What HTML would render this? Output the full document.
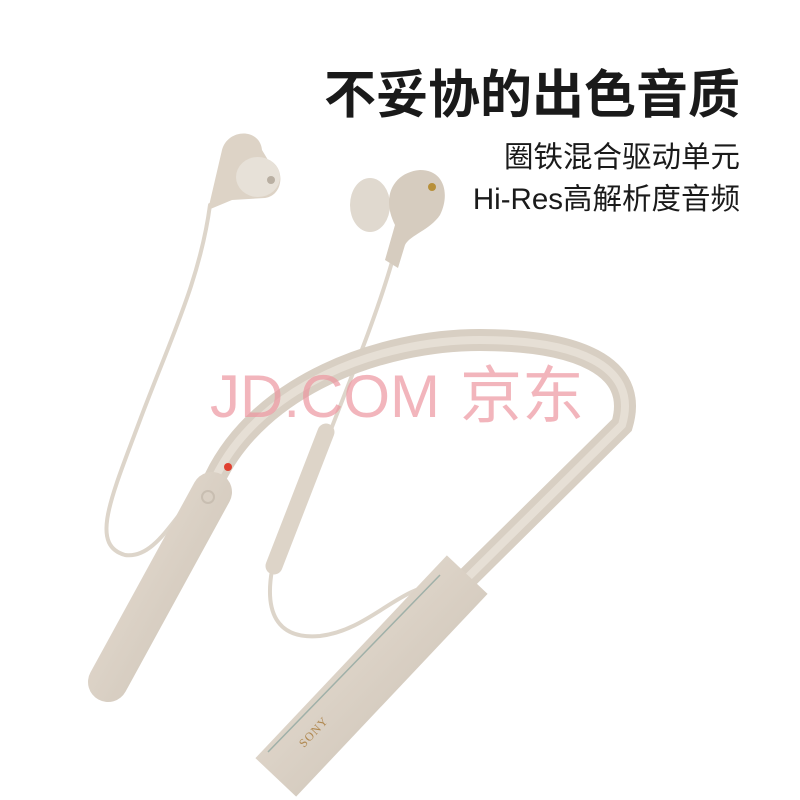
<!DOCTYPE html>
<html><head><meta charset="utf-8"><style>
html,body{margin:0;padding:0;background:#fff;}
.wrap{position:relative;width:800px;height:800px;overflow:hidden;background:#fff;font-family:"Liberation Sans","Noto Sans CJK SC",sans-serif;}
.t{position:absolute;right:60px;color:#1a1a1a;white-space:nowrap;}
</style></head><body><div class="wrap">
<svg width="800" height="800" style="position:absolute;left:0;top:0">
<defs>
<linearGradient id="g" x1="0" y1="0" x2="1" y2="1"><stop offset="0" stop-color="#e6ddd2"/><stop offset="1" stop-color="#cdc3b6"/></linearGradient>
</defs>
<g fill="none" stroke="#ddd5ca" stroke-width="4" stroke-linecap="round">
<path d="M210,205 C200,280 170,340 140,420 C110,500 90,545 125,555 C160,560 180,500 210,485"/>
<path d="M392,262 C375,320 350,380 330,432"/>
<path d="M272,570 C265,610 275,640 320,636 C370,630 400,585 440,585"/>
</g>
<path d="M215,478 C260,385 380,340 480,340 C575,340 640,365 622,425 L450,595" fill="none" stroke="#d8cfc3" stroke-width="22" stroke-linecap="round"/>
<path d="M215,478 C260,385 380,340 480,340 C575,340 640,365 622,425 L450,595" fill="none" stroke="#e6dfd5" stroke-width="8" stroke-linecap="round"/>
<line x1="108" y1="682" x2="212" y2="492" stroke="url(#g)" stroke-width="40" stroke-linecap="round"/>
<circle cx="228" cy="467" r="4" fill="#e04030"/>
<circle cx="208" cy="497" r="6" fill="none" stroke="#c8beb1" stroke-width="2"/>
<line x1="448" y1="595" x2="295" y2="757" stroke="url(#g)" stroke-width="56" stroke-linecap="square"/>
<line x1="440" y1="575" x2="268" y2="752" stroke="#9fb0a8" stroke-width="1.5"/>
<text x="0" y="0" transform="translate(304,748) rotate(-47)" font-family="Liberation Serif,serif" font-size="12" fill="#b08850" letter-spacing="1">SONY</text>
<line x1="326" y1="432" x2="274" y2="566" stroke="#ddd4c8" stroke-width="17" stroke-linecap="round"/>
<path d="M208,210 L222,150 C228,128 260,128 262,150 L268,160 C285,165 285,195 265,198 L232,200 Z" fill="#ddd3c6"/>
<ellipse cx="258" cy="177" rx="22" ry="20" fill="#e7e1d8"/>
<circle cx="271" cy="180" r="4" fill="#b9afa2"/>
<ellipse cx="370" cy="205" rx="20" ry="27" fill="#e0d9cf"/>
<path d="M385,260 L395,225 C380,195 395,172 420,170 C445,170 450,195 440,215 C430,230 410,235 405,245 L398,268 Z" fill="#d6ccbf"/>
<circle cx="432" cy="187" r="4" fill="#b8903a"/>
</svg>
<div class="t" style="top:64px;font-size:52px;font-weight:bold;line-height:64px">不妥协的出色音质</div>
<div class="t" style="top:140px;font-size:29.5px;line-height:36px">圈铁混合驱动单元</div>
<div class="t" style="top:182px;font-size:29.5px;line-height:36px">Hi-Res高解析度音频</div>
<div style="position:absolute;left:210px;top:362px;font-size:60px;line-height:70px;color:rgba(236,150,160,0.7);white-space:nowrap"><span>JD.COM</span><span style="margin-left:20px;font-size:62px">京东</span></div>
</div></body></html>
